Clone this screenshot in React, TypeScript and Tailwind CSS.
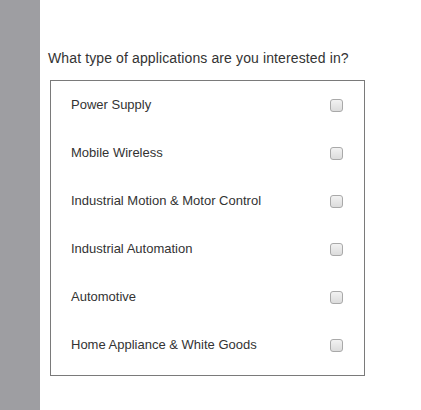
const options = [
  'Power Supply',
  'Mobile Wireless',
  'Industrial Motion & Motor Control',
  'Industrial Automation',
  'Automotive',
  'Home Appliance & White Goods',
]

export default function App() {
  return (
    <div className="flex h-[410px] w-[421px] bg-white" style={{ fontFamily: '"Liberation Sans", Arial, sans-serif' }}>
      <div className="w-[40px] shrink-0 bg-[#9e9ea2]" />
      <div className="flex-1 pt-[49px]">
        <p className="pl-[8px] text-[14px] leading-[18px] tracking-[0.12px] text-[#333]">What type of applications are you interested in?</p>
        <div className="ml-[10px] mt-[13px] w-[315px] border border-[#7a7a7a] pb-[6px]">
          {options.map((o) => (
            <label key={o} className="flex h-[48px] items-center justify-between pl-[20px] pr-[21px]">
              <span className="text-[13px] text-[#333]">{o}</span>
              <span className="h-[13px] w-[13px] rounded-[3px] border border-[#a9a9a9] bg-gradient-to-b from-[#f2f2f2] to-[#dcdcdc]" />
            </label>
          ))}
        </div>
      </div>
    </div>
  )
}
